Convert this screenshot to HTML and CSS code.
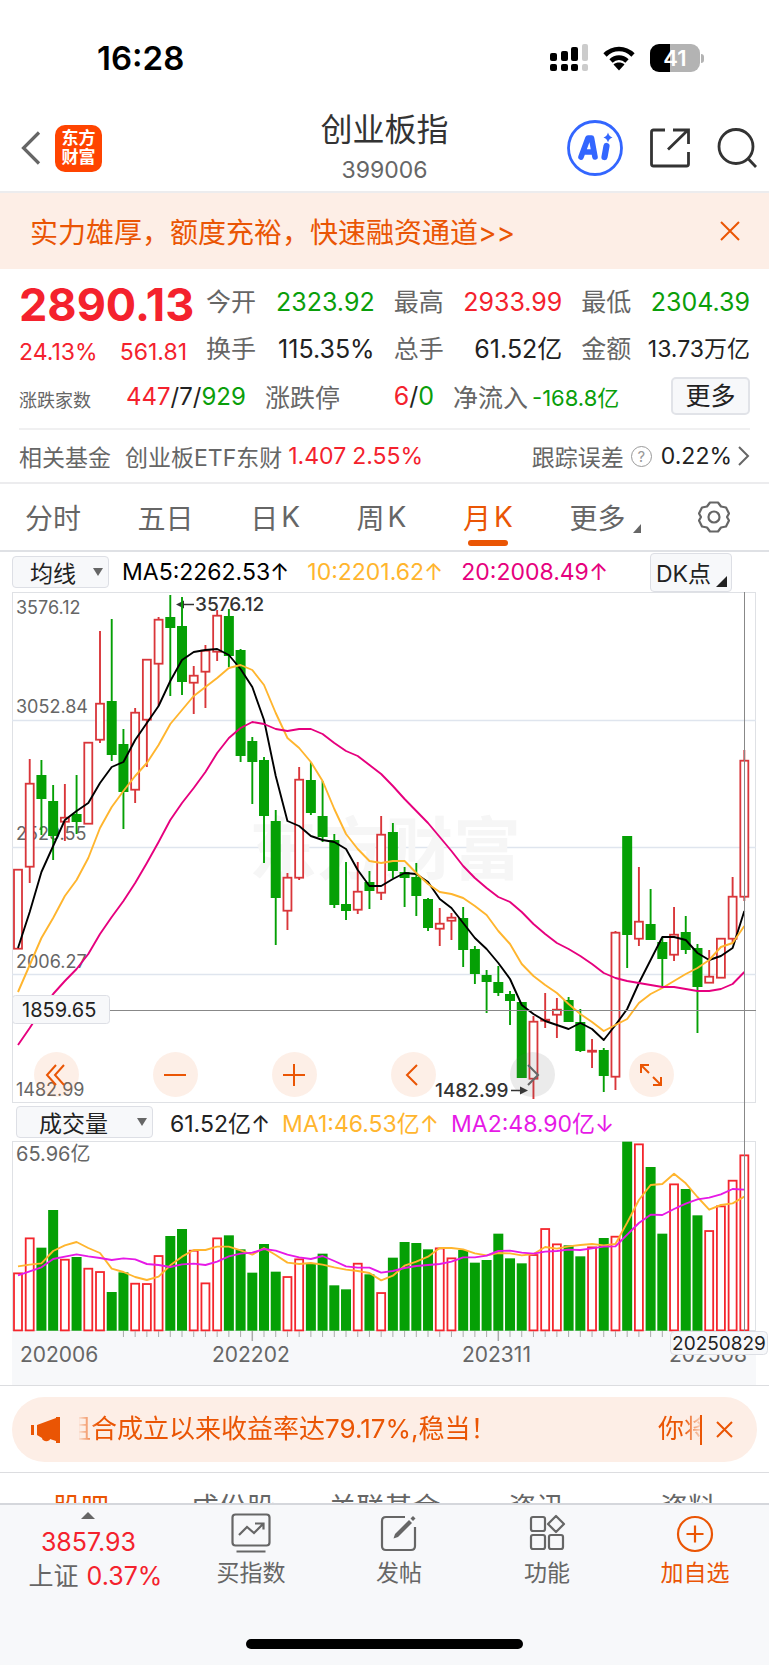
FILE: index.html
```html
<!DOCTYPE html>
<html lang="zh-CN">
<head>
<meta charset="utf-8">
<meta name="viewport" content="width=device-width, initial-scale=1">
<title>创业板指 399006</title>
<link rel="stylesheet" href="styles.css">
</head>
<body>
<div class="status">
  <span class="clock">16:28</span>
  <div class="status-icons">
    <svg width="38" height="28" viewBox="0 0 38 28"><g fill="#000"><rect x="0" y="9" width="7" height="8" rx="2"/><rect x="11" y="7" width="7" height="10" rx="2"/><rect x="21" y="3" width="7" height="14" rx="2"/><rect x="0" y="20" width="7" height="7" rx="2"/><rect x="11" y="20" width="7" height="7" rx="2"/><rect x="21" y="20" width="7" height="7" rx="2"/></g><g fill="#ccc"><rect x="32" y="0" width="6" height="17" rx="2"/><rect x="32" y="20" width="6" height="7" rx="2"/></g></svg>
    <svg width="32" height="25" viewBox="0 0 32 25"><path d="M2 9C10 1 22 1 30 9M8 15C12.500 10.500 19.500 10.500 24 15" fill="none" stroke="#000" stroke-width="4.600"/><path d="M16 24.500l-5.500-6c3-2.600 8-2.600 11 0z"/></svg>
    <div class="battery"><div class="battery-body">41</div><i class="nub"></i></div>
  </div>
</div>

<header class="nav">
  <div class="nav-side nav-left">
    <button class="plain" aria-label="返回"><svg width="20" height="34" viewBox="0 0 20 34" fill="none" stroke="#666" stroke-width="3.200"><path d="M18 1.500L2.500 17 18 32.500"/></svg></button>
    <div class="brand"><span>东方</span><span>财富</span></div>
  </div>
  <div class="title"><h1>创业板指</h1><p>399006</p></div>
  <div class="nav-side nav-right">
    <button class="plain" aria-label="Ai"><svg width="56" height="56" viewBox="0 0 56 56"><circle cx="28" cy="28" r="26.500" fill="none" stroke="#3366ff" stroke-width="2.800"/><g fill="none" stroke="#3366ff" stroke-linecap="round" stroke-linejoin="round"><path d="M14 37L21 18h3.500L28 37M18 32h9" stroke-width="5.600"/><path d="M39.500 26L37.500 37" stroke-width="6.200"/></g><path d="M41 12.500q1 4 4.500 5-3.500 1-4.500 5-1-4-4.500-5 3.500-1 4.500-5z" fill="#3366ff"/></svg></button>
    <button class="plain" aria-label="分享"><svg width="40" height="40" viewBox="0 0 40 40" fill="none" stroke="#333" stroke-width="2.800"><path d="M15 2H3.500Q1.500 2 1.500 4v32q0 2 2 2h33q2 0 2-2V24M18 21.500L38 2M23 2h15.500v14"/></svg></button>
    <button class="plain" aria-label="搜索"><svg width="40" height="40" viewBox="0 0 40 40" fill="none" stroke="#333" stroke-width="2.800"><circle cx="19" cy="18.500" r="17"/><path d="M31 30.500l8 8.500"/></svg></button>
  </div>
</header>

<div class="promo">
  <a class="promo-link" href="#">实力雄厚，额度充裕，快速融资通道&gt;&gt;</a>
  <button class="plain" aria-label="关闭"><svg width="20" height="20" viewBox="0 0 20 20" stroke="#ea5504" stroke-width="2"><path d="M1 1l18 18M19 1L1 19"/></svg></button>
</div>

<section class="quote">
  <div class="quote-top">
    <div class="price"><strong>2890.13</strong><div class="change"><span>24.13%</span><span>561.81</span></div></div>
    <dl class="stats">
      <div><dt>今开</dt><dd class="down">2323.92</dd></div>
      <div><dt>最高</dt><dd class="up">2933.99</dd></div>
      <div><dt>最低</dt><dd class="down">2304.39</dd></div>
      <div><dt>换手</dt><dd>115.35%</dd></div>
      <div><dt>总手</dt><dd>61.52亿</dd></div>
      <div><dt>金额</dt><dd class="tight">13.73万亿</dd></div>
    </dl>
  </div>
  <div class="breadth">
    <span class="small-label">涨跌家数</span>
    <span class="counts"><span class="up">447</span>/7/<span class="down">929</span></span>
    <span class="label">涨跌停</span>
    <span class="limits"><span class="up">6</span>/<span class="down">0</span></span>
    <span class="label">净流入</span>
    <span class="flow down">-168.8亿</span>
    <button class="more">更多</button>
  </div>
  <div class="fund">
    <span class="fund-name">相关基金</span>
    <span class="fund-name">创业板ETF东财</span>
    <span class="fund-num up">1.407</span><span class="fund-num up">2.55%</span>
    <span class="track">跟踪误差</span>
    <span class="help">?</span>
    <span class="track-num">0.22%</span>
    <svg width="12" height="20" viewBox="0 0 12 20" fill="none" stroke="#666" stroke-width="2"><path d="M1 1l9 9-9 9"/></svg>
  </div>
</section>

<nav class="periods">
  <button>分时</button><button>五日</button><button>日<span>K</span></button><button>周<span>K</span></button><button class="active">月<span>K</span></button><button class="period-more">更多<svg width="8" height="9" viewBox="0 0 8 9"><path d="M8 0v9H0z" fill="#666"/></svg></button>
  <button aria-label="设置"><svg width="32" height="32" viewBox="0 0 32 32" fill="none" stroke="#666" stroke-width="2.200" stroke-linejoin="round"><path d="M12 1.500h8l3 4 5 1 3 6-2 3.500 2 3.500-3 6-5 1-3 4h-8l-3-4-5-1-3-6 2-3.500-2-3.500 3-6 5-1z"/><circle cx="16" cy="16" r="5.500"/></svg></button>
</nav>

<div class="toolbar">
  <button class="chip chip-ma">均线<i class="caret"></i></button>
  <span class="ma ma5">MA5:2262.53↑</span>
  <span class="ma ma10">10:2201.62↑</span>
  <span class="ma ma20">20:2008.49↑</span>
  <button class="chip chip-dk">DK点<svg width="11" height="11" viewBox="0 0 11 11"><path d="M11 0v11H0z" fill="#222"/></svg></button>
</div>

<section class="chart">
  <div class="plot">
    <svg id="kline" viewBox="0 591 769 511" role="img" aria-label="月K线"></svg>
    <div class="controls">
      <button aria-label="最左"><svg viewBox="0 0 24 24"><path d="M12 2L3 12l9 10M20 2l-9 10 9 10"/></svg></button>
      <button aria-label="缩小"><svg viewBox="0 0 24 24"><path d="M1 12h22"/></svg></button>
      <button aria-label="放大"><svg viewBox="0 0 24 24"><path d="M1 12h22M12 1v22"/></svg></button>
      <button aria-label="左移"><svg viewBox="0 0 24 24"><path d="M16 2L6 12l10 10"/></svg></button>
      <button class="off" aria-label="右移"><svg viewBox="0 0 24 24"><path d="M8 2l10 10L8 22"/></svg></button>
      <button aria-label="全屏"><svg viewBox="0 0 24 24"><path d="M2 10V2h8M2 2l8 8M22 14v8h-8M22 22l-8-8"/></svg></button>
    </div>
  </div>
  <div class="toolbar toolbar-vol">
    <button class="chip chip-vol">成交量<i class="caret"></i></button>
    <span class="ma vol">61.52亿↑</span>
    <span class="ma ma10">MA1:46.53亿↑</span>
    <span class="ma vol2">MA2:48.90亿↓</span>
  </div>
  <svg id="volume" viewBox="0 1140 769 244" role="img" aria-label="成交量"></svg>
</section>

<div class="notice-wrap">
  <div class="notice">
    <svg width="30" height="26" viewBox="0 0 30 26" fill="#ea5504"><path d="M0 8h3v10H0zM6 8l19-7V0h4v26h-4v-2l-6-2c0 3-8 3-8-1l-5-3z"/></svg>
    <div class="marquee"><span>组合成立以来收益率达79.17%,稳当！</span><span>你将</span></div>
    <button class="plain" aria-label="关闭公告"><svg width="17" height="17" viewBox="0 0 17 17" stroke="#ea5504" stroke-width="2"><path d="M1 1l15 15M16 1L1 16"/></svg></button>
  </div>
</div>

<nav class="subtabs"><a class="active" href="#">股吧</a><a href="#">成份股</a><a href="#">关联基金</a><a href="#">资讯</a><a href="#">资料</a></nav>

<footer class="dock">
  <div class="dock-row">
    <div class="index"><i class="tri-up"></i><span class="up">3857.93</span><span class="index-name">上证<b>0.37%</b></span></div>
    <button class="dock-item"><svg width="40" height="40" viewBox="0 0 40 40" fill="none" stroke="#666" stroke-width="2.200"><rect x="1.500" y="1.500" width="37" height="31" rx="3"/><path d="M5.500 38.500h29M8 22l8-8 7 6 9-9M24 10.500h8.500v6"/></svg>买指数</button>
    <button class="dock-item"><svg width="40" height="40" viewBox="0 0 40 40" fill="none" stroke="#666" stroke-width="2.200"><path d="M26 4H7Q3 4 3 8v25q0 4 4 4h25q4 0 4-4V14"/><path d="M14.500 25.500L16 21 30 7l3 3-14 14z" fill="#666" stroke="none"/><path d="M31.500 5.500L34 3l2.500 2.500L34 8z" fill="#666" stroke="none"/></svg>发帖</button>
    <button class="dock-item"><svg width="40" height="40" viewBox="0 0 40 40" fill="none" stroke="#666" stroke-width="2.200"><rect x="4" y="4" width="14" height="14" rx="2"/><rect x="4" y="22" width="14" height="14" rx="2"/><rect x="22" y="22" width="14" height="14" rx="2"/><path d="M29 3l8 8-8 8-8-8z" stroke-linejoin="round"/></svg>功能</button>
    <button class="dock-item add"><svg width="40" height="40" viewBox="0 0 40 40" fill="none" stroke="#ea5504" stroke-width="2.200"><circle cx="20" cy="21" r="17"/><path d="M11.500 21h17M20 12.500v17"/></svg>加自选</button>
  </div>
  <div class="home"></div>
</footer>
<script src="chart.js"></script>
</body>
</html>
```
FILE: styles.css
```css
* { box-sizing: border-box; }
body {
  margin: 0;
  background: #fff;
  color: #333;
  font-family: Inter, "Noto Sans CJK SC", sans-serif;
  font-size: 24px;
}
button { font: inherit; color: inherit; background: none; border: 0; padding: 0; cursor: pointer; }
a { color: inherit; text-decoration: none; }
svg { display: block; flex: none; }
h1, p, dl, dd { margin: 0; }
.plain { display: flex; }
.up { color: #f4222d; }
.down { color: #0a9e0a; }

.status { display: flex; justify-content: space-between; align-items: center; padding: 38px 65px 0 97px; height: 78px; }
.clock { font-size: 33px; font-weight: 600; color: #000; line-height: 40px; }
.status-icons { display: flex; align-items: center; gap: 15px; }
.battery { display: flex; align-items: center; gap: 1px; }
.battery-body {
  width: 50px; height: 28px; border-radius: 9px;
  background: linear-gradient(90deg, #000 41%, #b3b3b3 41%);
  color: #fff; font-size: 22px; font-weight: 600; line-height: 28px; text-align: center;
}
.nub { width: 3px; height: 9px; background: #b3b3b3; border-radius: 0 3px 3px 0; }

.nav { display: grid; grid-template-columns: 1fr auto 1fr; align-items: center; height: 115px; padding: 27px 12px 0; border-bottom: 2px solid #ececee; }
.nav-side { display: flex; align-items: center; gap: 14px; }
.nav-left { padding-left: 9px; }
.nav-right { justify-content: flex-end; gap: 27px; }
.brand {
  width: 47px; height: 47px; border-radius: 10px; background: #ff4400; color: #fff;
  display: flex; flex-direction: column; justify-content: center; align-items: center;
  font-size: 17px; line-height: 19px; font-weight: 700;
}
.title { text-align: center; }
.title h1 { font-size: 32px; line-height: 44px; font-weight: 400; }
.title p { font-size: 23px; line-height: 36px; color: #666; }

.promo { display: flex; justify-content: space-between; align-items: center; height: 76px; padding: 0 29px 0 30px; background: #fdeee6; color: #ea5504; font-size: 28px; }

.quote { padding: 0 19px; border-bottom: 2px solid #ececee; }
.quote-top { display: flex; gap: 11px; padding-top: 10px; }
.price { flex: none; width: 176px; color: #f4222d; }
.price strong { display: block; font-size: 45px; line-height: 52px; font-weight: 700; }
.change { display: flex; justify-content: space-between; padding-right: 8px; font-size: 23px; line-height: 42px; }
.stats { flex: 1; display: grid; grid-template-columns: repeat(3, 1fr); column-gap: 19px; color: #222; }
.stats div { display: flex; justify-content: space-between; line-height: 47px; font-size: 25px; white-space: nowrap; }
.stats dt { color: #666; }
.stats .tight { font-size: 23px; }
.breadth { display: flex; align-items: center; height: 46px; color: #222; font-size: 25px; white-space: nowrap; }
.small-label { font-size: 18px; color: #666; width: 107px; padding-top: 6px; }
.counts { width: 139px; font-size: 24px; }
.label { color: #666; }
.limits { width: 113px; padding-right: 19px; text-align: right; }
.flow { font-size: 22px; margin-left: 4px; }
.more { margin-left: auto; width: 79px; height: 38px; border: 2px solid #e1e3e8; border-radius: 5px; background: #f7f8fa; line-height: 32px; }
.fund { display: flex; align-items: center; height: 54px; margin-top: 9px; border-top: 2px solid #f0f0f1; font-size: 23px; white-space: nowrap; color: #666; }
.fund-name { margin-right: 14px; }
.fund-name + .fund-num { margin-left: -8px; }
.fund-num { margin-right: 6px; }
.track { margin-left: auto; }
.help { width: 21px; height: 21px; border: 1px solid #999; border-radius: 50%; margin: 0 9px 0 7px; font-size: 15px; line-height: 19px; text-align: center; color: #999; }
.track-num { color: #222; margin-right: 6px; }

.periods { display: flex; justify-content: space-between; height: 68px; padding: 0 39px 0 25px; border-bottom: 2px solid #dfe1e5; font-size: 28px; color: #666; }
.periods button { position: relative; display: flex; align-items: center; gap: 3px; }
.periods .active { color: #ea5504; }
.periods .active::after { content: ""; position: absolute; left: 5px; right: 5px; bottom: 4px; height: 6px; border-radius: 3px; background: #ea5504; }
.period-more svg { margin: 22px 0 0 5px; }

.toolbar { display: flex; align-items: center; height: 40px; padding: 0 37px 0 12px; white-space: nowrap; }
.toolbar-vol { height: 38px; padding-left: 16px; }
.chip { display: flex; align-items: center; justify-content: space-between; height: 32px; border: 1px solid #dddfe5; border-radius: 4px; background: #f7f8fa; color: #222; font-size: 23px; }
.caret { border: 5px solid transparent; border-top: 8px solid #666; border-bottom: 0; }
.chip-ma { width: 97px; padding: 0 5px 0 17px; }
.chip-vol { width: 137px; padding: 0 5px 0 22px; }
.chip-dk { width: 82px; height: 39px; margin-left: auto; padding: 0 4px 0 5px; }
.chip-dk svg { margin-top: 18px; }
.ma { font-size: 23px; }
.ma5 { color: #000; margin-left: 13px; }
.ma10 { color: #ffb52e; margin-left: 18px; }
.ma20 { color: #e6007e; margin-left: 18px; }
.vol { color: #222; margin-left: 17px; }
.toolbar-vol .ma10 { margin-left: 12px; }
.vol2 { color: #e619e6; margin-left: 12px; }

.chart { position: relative; }
.chart > svg, .plot > svg { width: 100%; height: auto; }
.plot { position: relative; }
.controls { position: absolute; left: 4%; right: 12%; bottom: 6px; padding: 0 3px; display: flex; justify-content: space-between; }
.controls button { width: 45px; height: 45px; border-radius: 50%; background: rgba(240, 100, 20, .1); display: flex; align-items: center; justify-content: center; }
.controls svg { width: 24px; height: 24px; fill: none; stroke: #ea5504; stroke-width: 2; }
.controls .off { background: rgba(100, 100, 100, .13); }
.controls .off svg { stroke: #666; }
.chart::after { content: ""; position: absolute; left: 97%; margin-left: -2px; top: 0; bottom: 54px; width: 1px; background: #888; }

.notice-wrap { padding: 11px 12px 10px; border-top: 1px solid #dcdde0; border-bottom: 1px solid #dcdde0; }
.notice { display: flex; align-items: center; height: 65px; padding: 0 24px 0 19px; border-radius: 33px; background: #fdeee6; color: #ea5504; font-size: 26px; }
.marquee {
  flex: 1; display: flex; justify-content: space-between; overflow: hidden; height: 30px; line-height: 28px;
  margin: 0 14px 0 18px; border-right: 2px solid #ea5504; white-space: nowrap;
}
.marquee span:first-child { margin-left: -14px; -webkit-mask-image: linear-gradient(90deg, transparent 12px, #000 32px); mask-image: linear-gradient(90deg, transparent 12px, #000 32px); }
.marquee span:last-child { margin-right: -10px; -webkit-mask-image: linear-gradient(90deg, #000 26px, transparent 46px); mask-image: linear-gradient(90deg, #000 26px, transparent 46px); }
.subtabs { display: flex; height: 30px; overflow: hidden; padding: 15px 5px 0; font-size: 28px; line-height: 40px; color: #666; text-align: center; }
.subtabs a { flex: 1; }
.subtabs .active { color: #ea5504; }

.dock { background: #f7f8fa; border-top: 2px solid #d5d7dc; padding-bottom: 16px; }
.dock-row { display: flex; height: 134px; }
.index { flex: 0 0 23%; display: flex; flex-direction: column; align-items: center; padding-top: 7px; font-size: 25px; line-height: 34px; color: #666; }
.index .up { padding-top: 6px; }
.index-name { display: flex; gap: 8px; padding-left: 14px; white-space: nowrap; }
.index b { color: #f4222d; font-weight: 400; }
.tri-up { border: 7px solid transparent; border-top: 0; border-bottom: 7px solid #666; }
.dock-item { flex: 1; display: flex; flex-direction: column; align-items: center; gap: 3px; padding-top: 8px; color: #666; font-size: 23px; line-height: 34px; }
.dock-item.add { color: #ea5504; }
.home { width: 36%; height: 10px; margin: 0 auto; border-radius: 5px; background: #000; }
```
FILE: chart.js
```js
const X0 = 18, STEP = 11.715;
const RED = "#d9363a", GREEN = "#05a005";
const x = i => X0 + STEP * i;

// direction, high, body top, body bottom, low
const candles = [
["r",868,868,948,948],["r",758,782,866,882],["g",759,774,798,834],["g",784,800,835,859],["r",783,816,821,840],["g",774,813,821,833],["r",741,741,823,823],["r",630,702,739,742],["g",618,700,754,760],["g",728,743,791,828],
["r",707,711,789,802],["r",658,658,719,766],["r",616,618,663,705],["g",594,616,627,695],["g",596,625,681,694],["r",665,674,682,713],["r",644,649,671,707],["r",609,614,651,660],["g",608,615,655,666],["g",648,649,755,761],
["g",736,740,761,803],["g",756,759,815,862],["g",809,820,897,944],["r",872,876,910,929],["r",766,778,877,879],["g",761,779,812,814],["g",780,815,836,841],["g",833,839,904,907],["g",861,903,910,919],["r",861,890,909,913],
["g",870,881,890,908],["r",815,833,892,899],["g",822,831,870,877],["g",866,871,877,906],["g",862,876,895,915],["g",897,898,927,930],["r",907,922,928,945],["r",912,916,920,939],["g",906,917,949,966],["g",945,948,973,983],
["g",969,974,981,1012],["g",965,981,992,995],["g",990,993,1000,1024],["g",1001,1001,1077,1077],["r",1015,1020,1078,1098],["r",992,1018,1020,1027],["r",997,1008,1014,1037],["g",996,999,1021,1021],["g",1008,1021,1050,1051],["r",1038,1049,1050,1067],
["g",1047,1049,1075,1091],["r",930,931,1076,1089],["g",835,835,934,967],["r",866,920,938,945],["g",888,923,939,939],["g",937,941,958,986],["r",906,933,954,960],["g",915,931,949,953],["g",943,947,986,1032],["r",949,975,982,982],
["r",937,937,977,977],["r",876,895,938,943],["r",749,759,896,900]];
const ma5 = [947,911,871,845,819,810,802,782,766,761,739,722,705,680,659,651,649,648,654,668,686,719,775,820,825,835,839,841,848,869,885,885,878,872,873,881,898,907,922,937,948,962,978,1004,1013,1020,1024,1028,1022,1028,1039,1024,1008,982,959,936,936,939,952,959,955,947,910];
const ma10 = [991,964,937,917,895,879,857,827,806,790,775,762,744,723,709,695,686,677,667,664,669,684,712,737,747,761,780,808,833,848,860,862,860,860,872,883,891,893,897,905,914,930,943,963,975,984,992,1003,1013,1021,1030,1024,1018,1002,993,987,980,973,967,959,946,942,925];
const ma20 = [1044,1027,1009,993,980,968,953,933,916,900,882,862,841,819,802,787,771,752,737,727,721,723,728,730,728,728,733,742,750,755,764,773,785,798,810,822,836,850,865,877,887,896,901,911,923,933,942,948,955,963,972,977,980,982,984,986,986,988,990,990,988,983,971];
// distance of each bar top from the panel top, in thirds of a unit
const vol = [515,410,440,327,474,468,501,511,573,514,546,547,463,405,384,447,545,410,403,445,515,429,512,526,473,488,458,553,565,486,520,574,470,423,426,445,440,470,447,485,477,398,472,487,460,382,428,433,466,437,411,405,122,128,198,398,248,264,343,388,314,237,161];
const vma1 = [496,491,487,450,433,423,441,456,503,513,528,537,527,493,467,447,447,437,437,448,461,441,462,485,489,486,491,499,506,510,516,538,524,494,482,467,441,441,445,457,463,456,457,463,459,438,443,436,432,429,433,429,365,297,252,249,218,247,288,326,312,307,287];
const vma2 = [523,511,499,474,467,460,466,471,477,472,475,489,492,498,490,488,492,482,466,458,455,444,449,461,469,474,465,480,496,500,500,515,510,501,495,492,489,482,469,469,464,450,449,455,458,452,450,446,447,442,437,436,401,366,341,342,324,308,295,290,280,264,266];

const line = (a, b, c, d, color, w = 1) => `<line x1="${a}" y1="${b}" x2="${c}" y2="${d}" stroke="${color}" stroke-width="${w}"/>`;
const text = (a, b, s, size, color = "#666", extra = "") => `<text x="${a}" y="${b}" font-size="${size}" fill="${color}" ${extra}>${s}</text>`;
const curve = (ys, color) => `<polyline points="${ys.map((y, i) => x(i) + "," + y).join(" ")}" fill="none" stroke="${color}" stroke-width="1.9" stroke-linejoin="round"/>`;
const bar = (i, top, bottom, up, color) => up
  ? `<rect x="${x(i) - 4}" y="${top + .7}" width="8" height="${Math.max(bottom - top - 1, 1)}" fill="#fff" stroke="${color}" stroke-width="1.8"/>`
  : `<rect x="${x(i) - 5}" y="${top}" width="10" height="${bottom - top}" fill="${GREEN}"/>`;

let k = `<rect x="12.500" y="591.500" width="743" height="510" fill="none" stroke="#dfe1e5"/>`;
for (const y of [719.5, 846.5, 973.5]) k += line(12, y, 756, y, "#dfe5ee", 1.5);
k += text(249, 873, "东方财富", 68, "#f6f6f6", 'font-weight="700"');
[["3576.12",613],["3052.84",712],["2529.55",839],["2006.27",967],["1482.99",1095]].forEach(([s, y]) => k += text(16, y, s, 18));
k += text(195, 610, "3576.12", 19, "#333", 'font-weight="500"') + line(182, 603.5, 194, 603.5, "#333", 1.5) + `<path d="M176 603.500l8-4v8z" fill="#333"/>`;
candles.forEach(([d, h, t, b, l], i) => {
  const color = d === "r" ? RED : GREEN;
  if (h < t) k += line(x(i), h, x(i), t, color, 1.9);
  if (l > b) k += line(x(i), b, x(i), l, color, 1.9);
  k += bar(i, t, b, d === "r", color);
});
k += curve(ma5, "#000") + curve(ma10, "#ffb52e") + curve(ma20, "#e6007e");
k += text(435, 1096, "1482.99", 19, "#333", 'font-weight="500"') + line(511, 1089.5, 521, 1089.5, "#333", 1.5) + `<path d="M528 1089.500l-8-4v8z" fill="#333"/>`;
k += line(109, 1009.5, 756, 1009.5, "#888");
k += `<rect x="12.500" y="994.500" width="97" height="28" rx="3" fill="#f7f8fa" stroke="#dddfe5"/>` + text(22, 1016, "1859.65", 20, "#222");
document.getElementById("kline").innerHTML = k;

let v = `<rect x="12" y="1330" width="744" height="54" fill="#f7f8fa"/><rect x="12.500" y="1140.500" width="743" height="189" fill="none" stroke="#dfe1e5"/>`;
v += text(16, 1160, "65.96亿", 20);
vol.forEach((t, i) => v += bar(i, 1100 + t / 3, 1329.7, candles[i][0] === "r", "#f4262d"));
for (let i = 9; i < 58; i++) {
  const major = i === 20 || i === 41;
  v += line(x(i), 1330, x(i), major ? 1340 : 1336, "#aaa", major ? 1.5 : 1);
}
v += curve(vma1.map(t => 1100 + t / 3), "#ffb52e") + curve(vma2.map(t => 1100 + t / 3), "#e619e6");
[["202006",20],["202202",212],["202311",462],["202508",669]].forEach(([s, a]) => v += text(a, 1361, s, 21));
v += `<rect x="670.500" y="1330.500" width="97" height="23" rx="4" fill="#f7f8fa" stroke="#dddfe5"/>` + text(719, 1349, "20250829", 19, "#222", 'text-anchor="middle"');
document.getElementById("volume").innerHTML = v;
```
